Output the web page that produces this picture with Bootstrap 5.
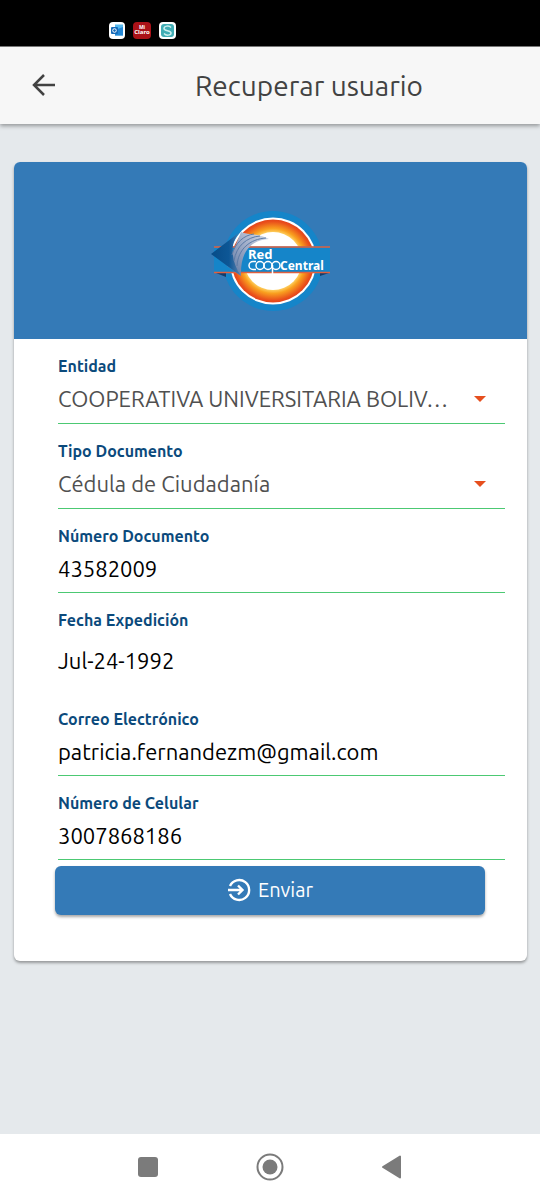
<!DOCTYPE html>
<html lang="es">
<head>
<meta charset="utf-8">
<meta name="viewport" content="width=device-width, initial-scale=1">
<title>Recuperar usuario</title>
<link href="https://cdn.jsdelivr.net/npm/bootstrap@5.3.0/dist/css/bootstrap.min.css" rel="stylesheet">
<style>
  body { font-family: Ubuntu, "Noto Sans", sans-serif; background: #e5e9ec; color: #000; }
  .status-bar { height: 46px; background: #000; padding: 21px 108px 0; gap: 7px; }
  .status-bar svg { width: 18px; height: 18px; }
  .app-bar { height: 78px; background: #f7f7f7; border-top: 1px solid #777; box-shadow: 0 2px 4px rgba(0,0,0,.35); }
  .back-btn { padding: 0 0 2px; margin-left: 32px; margin-right: 22px; border: 0; line-height: 0; color: #424242; }
  .app-title { font-size: 28px; line-height: 32px; font-weight: 400; color: #424242; }
  .form-panel { margin: 38px 13px 24px 14px; border: 0; border-radius: 6px; box-shadow: 0 2px 3px rgba(0,0,0,.35); overflow: hidden; }
  .brand-head { background: #347ab7; height: 177px; padding-top: 18px; }
  .brand-head svg { width: 140px; height: 120px; }
  .form-area { padding: 15px 22px 46px 44px; }
  .fields { gap: 15px; }
  .field-label { display: block; font-size: 16px; line-height: 24px; font-weight: 600; color: #0b4a7c; }
  .field-line { display: block; width: 100%; height: 45px; padding: 0 0 3px; border: 0; border-bottom: 1px solid #4cc973; border-radius: 0; background-color: transparent; font-size: 22px; line-height: 28px; color: #000; }
  .field-pick { height: 46px; padding-right: 40px; color: #505050; appearance: none; text-overflow: ellipsis;
    background: url("data:image/svg+xml,%3Csvg xmlns='http://www.w3.org/2000/svg' viewBox='0 0 12 6'%3E%3Cpath d='M0 0h12L6 6z' fill='%23e64f1e'/%3E%3C/svg%3E") no-repeat right 19px top 18px / 12px 6px; }
  .field-date { height: 60px; border-bottom: 0; }
  .field-line:focus { outline: 0; border-bottom-color: #347ab7; }
  .send-btn { margin: 6px 20px 0 -3px; height: 49px; padding: 0 0 2px; border: 0; border-radius: 6px; background: #347ab7; color: #fff; font-size: 20px; line-height: 24px; box-shadow: 0 2px 3px rgba(0,0,0,.35); gap: 7px; }
  .send-btn:hover { background: #2c6aa0; color: #fff; }
  .system-nav { height: 66px; background: #fff; padding: 0 87px; }
  .system-nav .btn { padding: 0; border: 0; line-height: 0; flex: 1 1 0; }
</style>
</head>
<body class="d-flex flex-column min-vh-100">
  <div class="status-bar d-flex">
    <svg viewBox="0 0 18 18" aria-hidden="true"><rect x="1" y="1" width="16" height="17" rx="4" fill="#fff"/><path d="M7 3.500h8v11H7z" fill="#56b9ee"/><path d="M7 9l8-3v8.500H7z" fill="#2387d5"/><rect x="3" y="6" width="7" height="7" rx="1" fill="#176bb8"/><circle cx="6.500" cy="9.500" r="1.800" fill="none" stroke="#fff"/></svg>
    <svg viewBox="0 0 18 18" aria-hidden="true"><rect x="0" y="1" width="18" height="17" rx="4" fill="#aa1218"/><g fill="#fff" font-family="Noto Sans, sans-serif" font-weight="700" text-anchor="middle"><text x="9" y="8" font-size="5">Mi</text><text x="9" y="13" font-size="6">Claro</text></g></svg>
    <svg viewBox="0 0 18 18" aria-hidden="true"><rect x="1" y="1" width="17" height="17" rx="4" fill="#fff"/><rect x="3" y="3" width="13" height="13" rx="3" fill="#40adb5"/><path d="M13 6.500C11 4 6 5 6 7.500c0 3 7 1.500 7 4.500 0 2.500-5 3-7 .5" fill="none" stroke="#cdf0ef" stroke-width="1.500"/></svg>
  </div>

  <header class="app-bar d-flex align-items-center">
    <button type="button" class="btn back-btn" aria-label="Volver">
      <svg width="24" height="24" viewBox="0 0 24 24" fill="none" stroke="currentColor" stroke-width="2.500"><path d="M23 12H3M12 2L2 12l10 10"/></svg>
    </button>
    <h1 class="app-title flex-grow-1 text-center mb-0">Recuperar usuario</h1>
  </header>

  <main class="flex-grow-1">
    <div class="card form-panel">
      <div class="brand-head d-flex justify-content-center align-items-center">
        <svg viewBox="0 0 140 120" role="img" aria-label="Red CoopCentral">
          <defs>
            <radialGradient id="sun"><stop offset=".66" stop-color="#ffe27a"/><stop offset=".78" stop-color="#f9a01f"/><stop offset=".95" stop-color="#e94e1b"/><stop offset="1" stop-color="#e4451a"/></radialGradient>
            <linearGradient id="fin" x1="0" x2="1"><stop offset="0" stop-color="#074b87"/><stop offset=".6" stop-color="#0d5796"/><stop offset="1" stop-color="#5d81ad"/></linearGradient>
            <linearGradient id="veil" x1="0" y1="1" x2="1" y2="0"><stop offset="0" stop-color="#58749f"/><stop offset=".6" stop-color="#a3b0cb"/><stop offset="1" stop-color="#d8dfeb"/></linearGradient>
          </defs>
          <circle cx="72" cy="61" r="50" fill="#1585c9"/>
          <circle cx="72" cy="61" r="43.500" fill="#fff"/>
          <circle cx="72" cy="61" r="41.500" fill="url(#sun)"/>
          <circle cx="72" cy="61" r="29" fill="#fff"/>
          <path d="M15 73l10 4V73zM128 73l-9 3V73z" fill="#123c6c"/>
          <path d="M13 46.500H129V73H13z" fill="#1585c9"/>
          <path d="M13 47H129M13 72.500H129" stroke="#e0603f" stroke-width="1.500"/>
          <path d="M40 32C46 35 58 33 68 39 52 40 39 49 40 76L26 66z" fill="url(#veil)"/>
          <path d="M10 54L39 32C28 42 30 62 40 76z" fill="url(#fin)"/>
          <path d="M31 55C34 43 43 35 53 34M33 61C35 46 46 37 59 36M36 66C37 49 49 39 65 38" fill="none" stroke="#5d7ba6" stroke-width="1"/>
          <g fill="#fff" font-family="Noto Sans, sans-serif" font-weight="700"><text x="47" y="59" font-size="13">Red</text><text x="79" y="70" font-size="12">Central</text></g>
          <g fill="none" stroke="#fff" stroke-width="1.500"><path d="M55 61.500h-3a4 4 0 0 0 0 8h3"/><circle cx="59" cy="65.500" r="4"/><circle cx="67" cy="65.500" r="4"/><circle cx="75" cy="65.500" r="4"/><path d="M71.500 65v9"/></g>
        </svg>
      </div>

      <form class="form-area d-flex flex-column">
        <div class="fields d-flex flex-column">
          <div>
            <label class="field-label" for="entidad">Entidad</label>
            <select class="field-line field-pick" id="entidad"><option>COOPERATIVA UNIVERSITARIA BOLIV…</option></select>
          </div>
          <div>
            <label class="field-label" for="tipo">Tipo Documento</label>
            <select class="field-line field-pick" id="tipo"><option>Cédula de Ciudadanía</option></select>
          </div>
          <div>
            <label class="field-label" for="documento">Número Documento</label>
            <input class="field-line" id="documento" type="text" inputmode="numeric" value="43582009">
          </div>
          <div>
            <label class="field-label" for="fecha">Fecha Expedición</label>
            <input class="field-line field-date" id="fecha" type="text" value="Jul-24-1992">
          </div>
          <div>
            <label class="field-label" for="correo">Correo Electrónico</label>
            <input class="field-line" id="correo" type="email" value="patricia.fernandezm@gmail.com">
          </div>
          <div>
            <label class="field-label" for="celular">Número de Celular</label>
            <input class="field-line" id="celular" type="tel" value="3007868186">
          </div>
        </div>
        <button type="button" class="btn send-btn d-flex align-items-center justify-content-center">
          <svg width="24" height="24" viewBox="0 0 24 24" fill="none" stroke="currentColor" stroke-width="2.400" aria-hidden="true"><path d="M3 8a10 10 0 1 1 0 8M1 12h14M11 7.500l4.500 4.500-4.500 4.500"/></svg>
          <span>Enviar</span>
        </button>
      </form>
    </div>
  </main>

  <nav class="system-nav d-flex align-items-center" aria-label="Sistema">
    <button type="button" class="btn" aria-label="Recientes"><svg width="28" height="28" viewBox="0 0 28 28"><rect x="4" y="4" width="20" height="20" rx="3" fill="#7b7b7b"/></svg></button>
    <button type="button" class="btn" aria-label="Inicio"><svg width="28" height="28" viewBox="0 0 28 28"><circle cx="14" cy="14" r="12.500" fill="none" stroke="#7b7b7b" stroke-width="2"/><circle cx="14" cy="14" r="7.500" fill="#7b7b7b"/></svg></button>
    <button type="button" class="btn" aria-label="Atrás"><svg width="28" height="28" viewBox="0 0 28 28"><path d="M5 14L22 3.500v21z" fill="#7b7b7b" stroke="#7b7b7b" stroke-width="2" stroke-linejoin="round"/></svg></button>
  </nav>
<script src="https://cdn.jsdelivr.net/npm/bootstrap@5.3.0/dist/js/bootstrap.bundle.min.js"></script>
</body>
</html>
